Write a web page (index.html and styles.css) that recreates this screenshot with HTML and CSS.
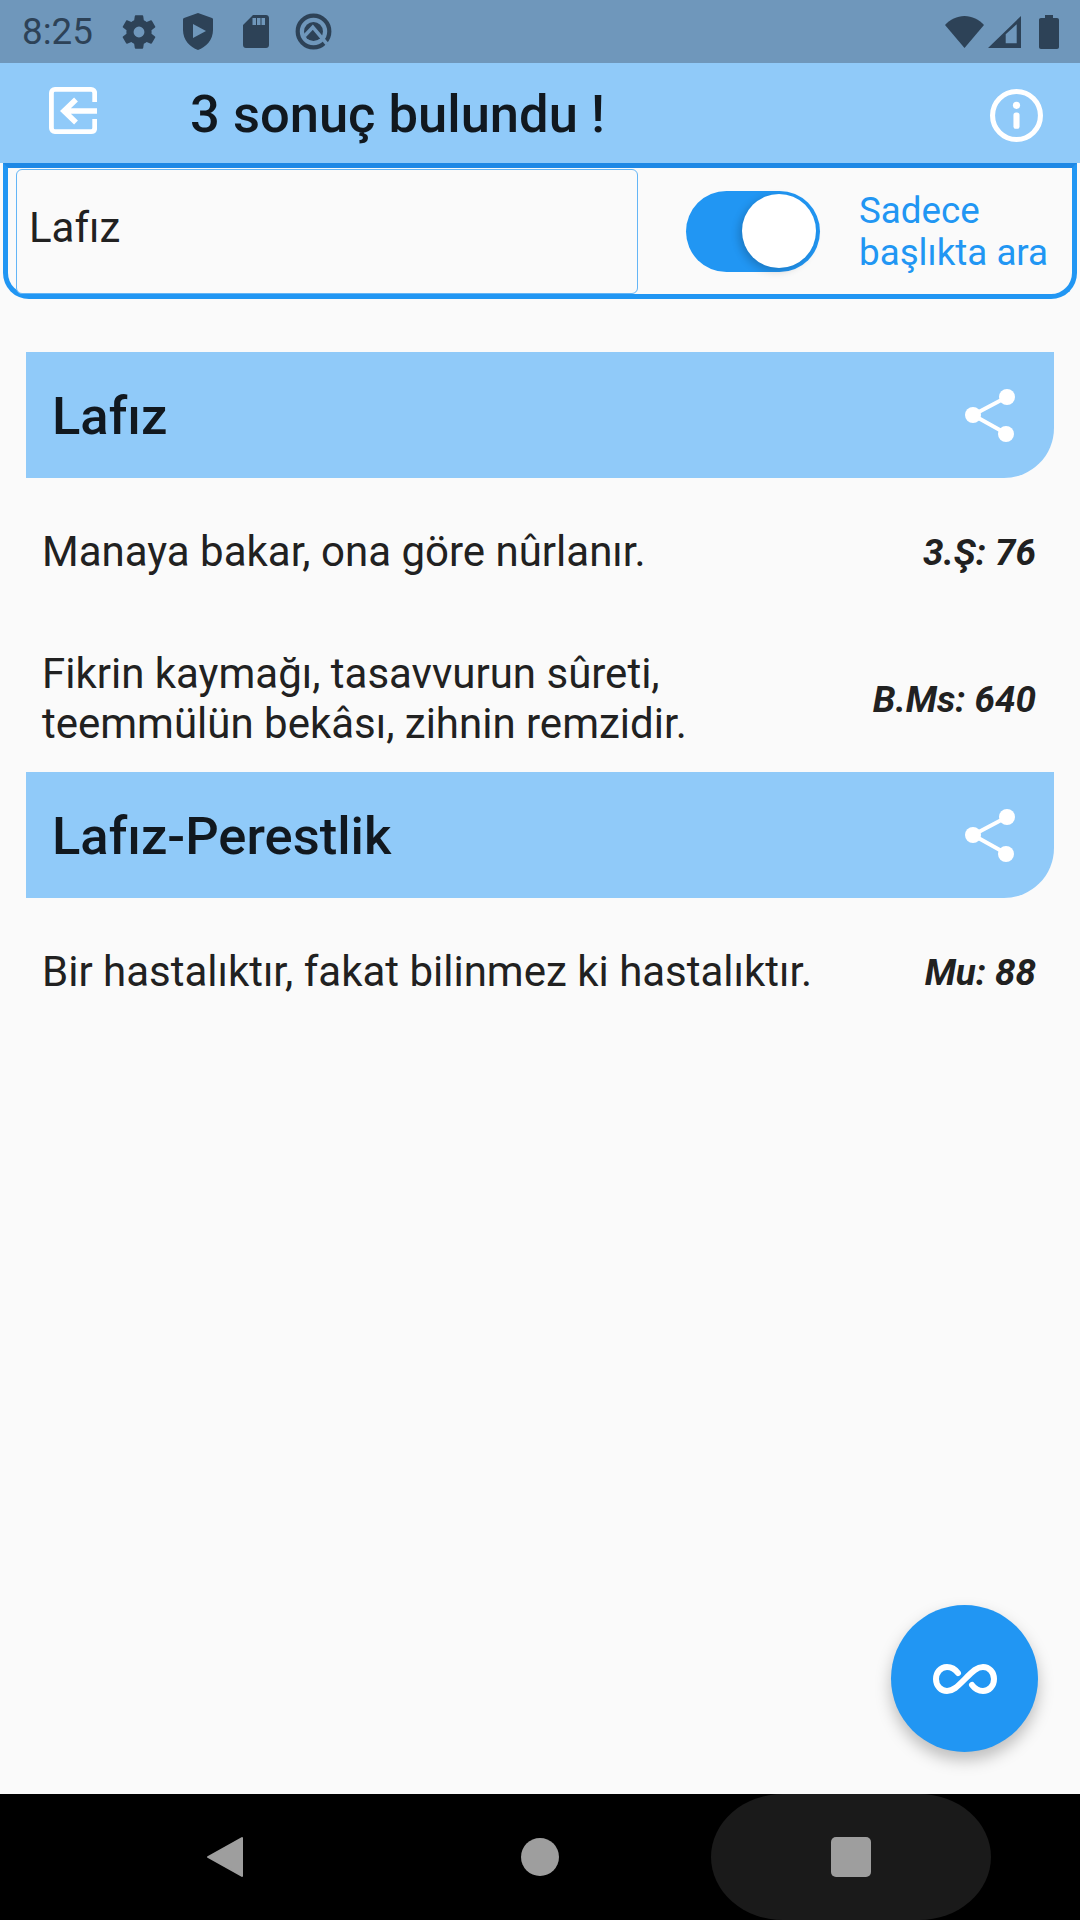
FILE: index.html
```html
<!DOCTYPE html>
<html lang="en">
  <head>
    <meta charset="UTF-8" />
    <meta name="viewport" content="width=device-width, initial-scale=1.0" />
    <title>Sonuçlar</title>
    <link rel="stylesheet" href="styles.css">
  </head>
  <body>
    <div class="status-bar">
      <span class="clock">8:25</span>
      <svg class="st-gear" viewBox="0 0 24 24"><path fill-rule="evenodd" d="M19.14 12.94c.04-.3.06-.61.06-.94 0-.32-.02-.64-.07-.94l2.03-1.58a.49.49 0 0 0 .12-.61l-1.92-3.32a.488.488 0 0 0-.59-.22l-2.39.96c-.5-.38-1.03-.7-1.62-.94l-.36-2.54a.484.484 0 0 0-.48-.41h-3.84c-.24 0-.43.17-.47.41l-.36 2.54c-.59.24-1.13.57-1.62.94l-2.39-.96c-.22-.08-.47 0-.59.22L2.74 8.87c-.12.21-.08.47.12.61l2.03 1.58c-.05.3-.09.63-.09.94s.02.64.07.94l-2.03 1.58a.49.49 0 0 0-.12.61l1.92 3.32c.12.22.37.29.59.22l2.39-.96c.5.38 1.03.7 1.62.94l.36 2.54c.05.24.24.41.48.41h3.84c.24 0 .44-.17.47-.41l.36-2.54c.59-.24 1.13-.56 1.62-.94l2.39.96c.22.08.47 0 .59-.22l1.92-3.32c.12-.22.07-.47-.12-.61l-2.01-1.58zM12 15.1a3.100 3.100 0 1 1 0-6.200 3.100 3.100 0 0 1 0 6.200z"/></svg>
      <svg class="st-shield" viewBox="0 0 30 38"><path fill-rule="evenodd" d="M15 0 L29 5 C29.600 5.200 30 5.800 30 6.500 V17 C30 27 23 34 15 37 C7 34 0 27 0 17 V6.500 C0 5.800 0.400 5.200 1 5 Z M10 11 V25 L23 18 Z"/></svg>
      <svg class="st-sd" viewBox="0 0 26 33"><path fill-rule="evenodd" d="M10 0 H23 C24.700 0 26 1.300 26 3 V30 C26 31.700 24.700 33 23 33 H3 C1.300 33 0 31.700 0 30 V10 Z M9.500 3 V10 H13 V3 Z M14 3 V10 H17.500 V3 Z M18.500 3 V10 H22 V3 Z"/></svg>
      <svg class="st-q" viewBox="0 0 37 37">
        <circle cx="18.500" cy="18.500" r="15.800" class="q-ring"/>
        <circle cx="18.500" cy="18.500" r="9.500" class="q-core"/>
        <path d="M9.500 23 L17.800 14.200 L32 31" class="q-cut"/>
      </svg>
      <span class="st-gap"></span>
      <svg class="st-wifi" viewBox="0 0 39 32"><path d="M19.500 32 L0 9 C5 3.500 12 0 19.500 0 C27 0 34 3.500 39 9 Z"/></svg>
      <svg class="st-signal" viewBox="0 0 33 32"><path fill-rule="evenodd" d="M0 32 L33 0 V32 Z M17.700 27.300 H28.700 V8.300 L17.700 18.300 Z"/></svg>
      <svg class="st-battery" viewBox="0 0 20 34"><path d="M6 0 H14 V3 H18 C19.200 3 20 3.800 20 5 V32 C20 33.200 19.200 34 18 34 H2 C0.800 34 0 33.200 0 32 V5 C0 3.800 0.800 3 2 3 H6 Z"/></svg>
    </div>

    <header class="app-bar">
      <svg class="exit-icon" viewBox="0 0 48 47">
        <path d="M45.700 15 V6 C45.700 3.800 44.300 2.400 42 2.400 H6 C3.800 2.400 2.400 3.800 2.400 6 V41 C2.400 43.200 3.800 44.600 6 44.600 H42 C44.300 44.600 45.700 43.200 45.700 41 V32" fill="none" stroke="#fff" stroke-width="4.800"/>
        <path d="M48 24 H15 M27 12.500 L15 24 L27 35.500" fill="none" stroke="#fff" stroke-width="5.500"/>
      </svg>
      <h1 class="title">3 sonuç bulundu !</h1>
      <svg class="info-icon" viewBox="0 0 52 52">
        <circle cx="26" cy="26" r="23.500" fill="none" stroke="#fff" stroke-width="5"/>
        <circle cx="26" cy="16" r="3.500" fill="#fff"/>
        <rect x="23" y="23" width="6" height="16" rx="2.500" fill="#fff"/>
      </svg>
    </header>

    <div class="search-box">
      <input class="search-input" type="text" value="Lafız" />
      <div class="toggle"><span class="knob"></span></div>
      <div class="toggle-label">Sadece<br />başlıkta ara</div>
    </div>

    <main class="results">
      <section>
        <div class="word-head">
          <h2>Lafız</h2>
          <svg class="share-icon" viewBox="0 0 52 54"><path d="M42 8 L8 26 L42 45" fill="none" stroke="#fff" stroke-width="4"/><circle cx="42" cy="8" r="8" fill="#fff"/><circle cx="8" cy="26" r="8" fill="#fff"/><circle cx="41" cy="45" r="8" fill="#fff"/></svg>
        </div>
        <div class="row">
          <p class="row-text">Manaya bakar, ona göre nûrlanır.</p>
          <span class="row-ref">3.Ş: 76</span>
        </div>
        <div class="row">
          <p class="row-text">Fikrin kaymağı, tasavvurun sûreti,<br />teemmülün bekâsı, zihnin remzidir.</p>
          <span class="row-ref">B.Ms: 640</span>
        </div>
      </section>
      <section>
        <div class="word-head">
          <h2>Lafız-Perestlik</h2>
          <svg class="share-icon" viewBox="0 0 52 54"><path d="M42 8 L8 26 L42 45" fill="none" stroke="#fff" stroke-width="4"/><circle cx="42" cy="8" r="8" fill="#fff"/><circle cx="8" cy="26" r="8" fill="#fff"/><circle cx="41" cy="45" r="8" fill="#fff"/></svg>
        </div>
        <div class="row">
          <p class="row-text">Bir hastalıktır, fakat bilinmez ki hastalıktır.</p>
          <span class="row-ref">Mu: 88</span>
        </div>
      </section>

      <button class="fab">
        <svg viewBox="0 0 64 30"><path d="M25 9 C22 5 18 3 14 3 C7 3 3 9 3 15 C3 22 8 27 14 27 C20 27 24 23 32 15 C40 7 44 3 50 3 C56 3 61 8 61 15 C61 22 56 27 50 27 C46 27 42 25 39 21" fill="none" stroke="#fff" stroke-width="6" stroke-linecap="round"/></svg>
      </button>
    </main>

    <nav class="nav-bar">
      <svg class="nav-back" viewBox="0 0 38 42"><path d="M36 2 V40 L2 21 Z"/></svg>
      <span class="nav-home"></span>
      <div class="nav-recent"><span class="nav-square"></span></div>
    </nav>
  </body>
</html>
```

FILE: styles.css
```css
body {
  margin: 0;
  width: 1080px;
  height: 1920px;
  display: flex;
  flex-direction: column;
  overflow: hidden;
  background: #fafafa;
  font-family: Roboto, "Noto Sans", sans-serif;
  color: #212121;
}

/* Status bar */
.status-bar {
  height: 63px;
  flex: none;
  display: flex;
  align-items: center;
  padding: 0 21px 0 22px;
  box-sizing: border-box;
  background: #6f97bb;
}

.status-bar svg {
  fill: #2d4257;
  flex: none;
}

.clock {
  font-size: 36.75px;
  color: #2d4257;
  width: 96px;
  flex: none;
}

.st-gear {
  width: 42px;
  height: 42px;
  margin-right: 23px;
}

.st-shield {
  width: 30px;
  height: 38px;
  margin-right: 30px;
}

.st-sd {
  width: 26px;
  height: 33px;
  margin-right: 26px;
}

.st-q {
  width: 37px;
  height: 37px;
}

.q-ring {
  fill: none;
  stroke: #2d4257;
  stroke-width: 4.2;
}

.q-cut {
  fill: none;
  stroke: #6f97bb;
  stroke-width: 3.5;
}

.st-gap {
  flex: 1;
}

.st-wifi {
  width: 39px;
  height: 32px;
  margin-right: 4px;
}

.st-signal {
  width: 33px;
  height: 32px;
  margin-right: 18px;
}

.st-battery {
  width: 20px;
  height: 34px;
}

/* App bar */
.app-bar {
  height: 100px;
  flex: none;
  display: flex;
  align-items: center;
  padding: 0 37px 0 49px;
  box-sizing: border-box;
  background: #90caf9;
}

.exit-icon {
  width: 48px;
  height: 47px;
  margin-bottom: 5px;
}

.title {
  flex: 1;
  margin: 2px 0 0 93px;
  font-size: 52.5px;
  font-weight: 500;
  color: #11181f;
}

.info-icon {
  width: 53px;
  height: 53px;
  margin-top: 4px;
}

/* Search row */
.search-box {
  height: 136px;
  flex: none;
  display: flex;
  align-items: center;
  margin: 0 3px;
  padding: 0 8px;
  box-sizing: border-box;
  border: 5px solid #2196f3;
  border-top-color: #1e88e5;
  border-radius: 0 0 26px 26px;
}

.search-input {
  width: 622px;
  height: 125px;
  padding: 0 12px 8px;
  box-sizing: border-box;
  flex: none;
  border: 1px solid #64b5f6;
  border-radius: 6px;
  background: #fafafa;
  font-family: inherit;
  font-size: 42px;
  color: #212121;
  outline: none;
}

.toggle {
  width: 134px;
  height: 81px;
  flex: none;
  display: flex;
  align-items: center;
  justify-content: flex-end;
  margin-left: 48px;
  padding-right: 4px;
  box-sizing: border-box;
  border-radius: 41px;
  background: #2196f3;
}

.knob {
  width: 74px;
  height: 74px;
  border-radius: 50%;
  background: #fff;
  box-shadow: -3px 3px 8px rgba(0, 0, 0, 0.2);
}

.toggle-label {
  margin-left: 39px;
  padding-top: 2px;
  font-size: 36.75px;
  line-height: 42px;
  white-space: nowrap;
  color: #2196f3;
}

/* Results */
.results {
  flex: 1;
  position: relative;
  padding-top: 53px;
}

.word-head {
  height: 126px;
  margin: 0 26px;
  padding: 0 37px 0 26px;
  display: flex;
  align-items: center;
  justify-content: space-between;
  background: #90caf9;
  border-bottom-right-radius: 50px;
}

.word-head h2 {
  margin: 2px 0 0;
  font-size: 52.5px;
  font-weight: 500;
  color: #11181f;
}

.share-icon {
  width: 52px;
  height: 54px;
  margin-top: 2px;
}

.row {
  display: flex;
  align-items: center;
  justify-content: space-between;
  padding: 49px 44px 23px 42px;
}

.row-text {
  margin: 0;
  font-size: 42px;
  line-height: 50px;
}

.row-ref {
  font-size: 36.75px;
  font-weight: 700;
  font-style: italic;
  white-space: nowrap;
}

.fab {
  position: absolute;
  right: 42px;
  bottom: 42px;
  width: 147px;
  height: 147px;
  padding: 0;
  display: flex;
  align-items: center;
  justify-content: center;
  border: none;
  border-radius: 50%;
  background: #2196f3;
  box-shadow: 0 8px 16px rgba(0, 0, 0, 0.25);
}

.fab svg {
  width: 64px;
  height: 30px;
}

/* Navigation bar */
.nav-bar {
  height: 126px;
  flex: none;
  display: flex;
  align-items: center;
  padding: 0 89px 0 206px;
  box-sizing: border-box;
  background: #000;
}

.nav-back {
  width: 38px;
  height: 42px;
  fill: #9e9e9e;
  stroke: #9e9e9e;
  stroke-width: 2;
  stroke-linejoin: round;
}

.nav-home {
  width: 38px;
  height: 38px;
  margin-left: 277px;
  border-radius: 50%;
  background: #9e9e9e;
}

.nav-recent {
  width: 280px;
  height: 126px;
  margin-left: 152px;
  display: flex;
  align-items: center;
  justify-content: center;
  border-radius: 72px / 63px;
  background: #1a1a1a;
}

.nav-square {
  width: 40px;
  height: 40px;
  border-radius: 5px;
  background: #9e9e9e;
}
```
